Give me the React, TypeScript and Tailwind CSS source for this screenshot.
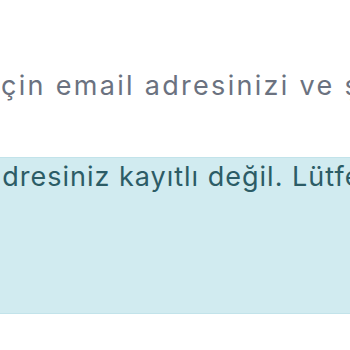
export default function App() {
  return (
    <div className="w-[350px] h-[350px] overflow-hidden bg-white font-['Inter',sans-serif]">
      <div className="pt-[70px] h-[157px]">
        <p className="whitespace-nowrap text-[27px] leading-[32px] tracking-[2.3px] text-[#6b7280] ml-[1px]">
          çin email adresinizi ve şifrenizi giriniz.
        </p>
      </div>
      <div className="h-[157px] bg-[#d1ebf0] border-y border-[#c2e3ea] pt-[3px]">
        <p className="whitespace-nowrap text-[27px] leading-[32px] tracking-[1px] text-[#2c5c66] ml-[-14px]">
          adresiniz kayıtlı değil. Lütfen kayıt olunuz.
        </p>
      </div>
    </div>
  );
}
